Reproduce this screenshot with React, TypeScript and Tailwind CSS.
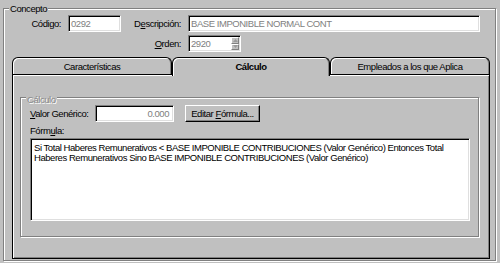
import type { ReactNode } from 'react';

const SUNKEN =
  'bg-white border border-t-[#808080] border-l-[#808080] border-b-white border-r-white shadow-[inset_1px_1px_0_#000,inset_-1px_-1px_0_#dfdfdf]';

function Field({
  value,
  className = '',
  right = false,
  children,
}: {
  value: string;
  className?: string;
  right?: boolean;
  children?: ReactNode;
}) {
  return (
    <div
      className={`flex h-[17px] items-center whitespace-nowrap text-[#808080] ${SUNKEN} ${
        right ? 'justify-end pr-[4px]' : 'pl-[2px]'
      } ${className}`}
    >
      <span>{value}</span>
      {children}
    </div>
  );
}

function SpinBtn({ up = false }: { up?: boolean }) {
  return (
    <div className="flex w-[8px] flex-1 items-center justify-center border border-t-white border-l-white border-r-[#808080] border-b-[#808080] bg-[#c0c0c0]">
      <svg width="5" height="3" viewBox="0 0 5 3">
        <path d={up ? 'M2.5 0L5 3H0z' : 'M0 0H5L2.5 3z'} fill="#9a9a9a" />
      </svg>
    </div>
  );
}

function Tab({ label, active = false, w }: { label: string; active?: boolean; w: string }) {
  return (
    <div
      className={`relative flex items-center justify-center whitespace-nowrap rounded-t-[6px] border border-b-0 border-black bg-[#c0c0c0] shadow-[inset_1px_1px_0_#fff,inset_-1px_0_0_#808080] ${w} ${
        active ? 'z-10 -mb-[2px] h-[19px] pb-[2px] font-bold' : 'h-[17px]'
      }`}
    >
      {label}
    </div>
  );
}

export default function App() {
  return (
    <div className="h-[263px] w-[500px] overflow-hidden bg-[#c0c0c0] pt-[8px] pl-[3px] font-['Liberation_Sans',Arial,sans-serif] text-[9.5px] leading-[13px] tracking-[-0.45px] text-black">
      {/* Concepto */}
      <div className="relative h-[253px] w-[493px] border border-[#808080] shadow-[inset_1px_1px_0_#fff,1px_1px_0_#fff]">
        <span className="absolute left-[5px] top-[-7px] bg-[#c0c0c0] px-[1px]">Concepto</span>

        <div className="mt-[6px] flex h-[17px] items-center whitespace-nowrap">
          <span className="w-[57px] text-right">Código:</span>
          <Field className="ml-[7px] w-[53px]" value="0292" />
          <span className="w-[60px] text-right">
            D<u>e</u>scripción:
          </span>
          <Field className="ml-[7px] w-[292px]" value="BASE IMPONIBLE NORMAL CONT" />
        </div>

        <div className="mt-[3px] flex h-[17px] items-center whitespace-nowrap">
          <span className="w-[177px] text-right">
            <u>O</u>rden:
          </span>
          <Field className="ml-[7px] w-[53px]" value="2920">
            <div className="ml-auto mr-[1px] flex h-[13px] flex-col">
              <SpinBtn up />
              <SpinBtn />
            </div>
          </Field>
        </div>

        {/* Tabs */}
        <div className="ml-[8px] mt-[5px] flex items-end">
          <Tab label="Características" w="w-[160px]" />
          <Tab label="Cálculo" active w="w-[158px]" />
          <Tab label="Empleados a los que Aplica" w="w-[160px]" />
        </div>

        <div className="ml-[8px] h-[185px] w-[478px] border border-black shadow-[inset_1px_1px_0_#fff,inset_-1px_-1px_0_#808080]">
          {/* Cálculo group */}
          <div className="relative ml-[7px] mt-[22px] h-[140px] w-[459px] border border-[#808080] shadow-[inset_1px_1px_0_#fff,1px_1px_0_#fff]">
            <span className="absolute left-[5px] top-[-5px] bg-[#c0c0c0] px-[1px] text-[#8a8a8a] [text-shadow:1px_1px_0_#fff]">
              Cálculo
            </span>

            <div className="mt-[7px] flex h-[17px] items-center whitespace-nowrap pl-[9px]">
              <span className="w-[65px]">
                <u>V</u>alor Genérico:
              </span>
              <Field className="w-[79px]" value="0.000" right />
              <button className="ml-[11px] flex h-[17px] w-[75px] items-center justify-center border border-t-white border-l-white border-r-black border-b-black bg-[#c0c0c0] shadow-[inset_-1px_-1px_0_#808080]">
                <span>
                  Editar <u>F</u>órmula...
                </span>
              </button>
            </div>

            <div className="mt-[2px] h-[13px] pl-[9px]">
              Fórm<u>u</u>la:
            </div>

            <div className={`ml-[9px] mt-[1px] h-[83px] w-[440px] whitespace-nowrap pl-[3px] pt-[4px] leading-[10px] ${SUNKEN}`}>
              Si Total Haberes Remunerativos &lt; BASE IMPONIBLE CONTRIBUCIONES (Valor Genérico) Entonces Total
              <br />
              Haberes Remunerativos Sino BASE IMPONIBLE CONTRIBUCIONES (Valor Genérico)
            </div>
          </div>
        </div>
      </div>
    </div>
  );
}
